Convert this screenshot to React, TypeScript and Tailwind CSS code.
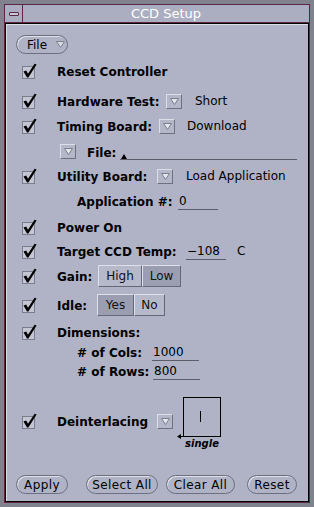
import React from 'react';

const sans = "font-['DejaVu_Sans',sans-serif]";

function Check() {
  return (
    <svg width="16" height="16" viewBox="0 0 16 16" className="block">
      <rect x="0.5" y="3.5" width="12" height="12" fill="#c4c6d3" stroke="#7b7d8c" />
      <path d="M1.5 8.5 L4.2 7.6 L6 10.8 L12.6 0.8 L14.6 1.6 L6.4 14.6 L5 14.6 Z" fill="#000" />
    </svg>
  );
}

function MenuBtn() {
  return (
    <span className="flex h-[15px] w-[16px] shrink-0 items-center justify-center border border-t-[#dcdee8] border-l-[#dcdee8] border-r-[#6f7180] border-b-[#6f7180] bg-[#b4b7c8]">
      <svg width="9" height="7" viewBox="0 0 9 7">
        <path d="M0.5 0.5 H8.5 L4.5 6.5 Z" fill="#e4e6ee" stroke="#7c7e8c" />
      </svg>
    </span>
  );
}

function Pill({ label, w, className = '' }: { label: string; w: string; className?: string }) {
  return (
    <span
      className={`flex h-[19px] shrink-0 items-center justify-center rounded-full border border-[#6d6f7e] shadow-[inset_1px_1px_0_#dfe1ea] text-[12px] tracking-[0.4px] text-black ${w} ${className}`}
    >
      {label}
    </span>
  );
}

function Field({ value, w }: { value: string; w: string }) {
  return (
    <span className={`flex h-[17px] shrink-0 items-center border-b border-[#5b5d6b] pl-[1px] text-[12px] leading-[16px] ${w}`}>
      {value}
    </span>
  );
}

function Toggle({ label, on, w }: { label: string; on?: boolean; w: string }) {
  return (
    <span
      className={`flex h-[22px] items-center justify-center border border-t-[#dfe1ea] border-l-[#dfe1ea] border-r-[#666876] border-b-[#666876] text-[12px] text-[#111] ${w} ${
        on ? 'bg-[#9b9eb1]' : 'bg-[#b6b9ca]'
      }`}
    >
      {label}
    </span>
  );
}

function Row({ h, check = true, children, className = '' }: { h: string; check?: boolean; children: React.ReactNode; className?: string }) {
  return (
    <div className={`flex items-center ${h} ${className}`}>
      <div className="w-[35px] shrink-0">{check && <Check />}</div>
      {children}
    </div>
  );
}

const label = 'text-[12px] font-bold leading-[16px] pt-[2px] whitespace-nowrap';

export default function App() {
  return (
    <div className={`h-[507px] w-[314px] bg-[#80828d] p-[4px] ${sans}`}>
      <div className="flex h-full flex-col border border-[#5a2745]">
        {/* title bar */}
        <div className="flex h-[18px] shrink-0 border-b border-[#5a2745] bg-[#abaec0]">
          <div className="flex w-[18px] items-center justify-center border-r border-[#5a2745]">
            <span className="block h-[4px] w-[10px] rounded-[1px] border border-[#5a2745] bg-[#c8cad6]" />
          </div>
          <div className="flex flex-1 items-center justify-center text-[13px] text-white">CCD Setup</div>
        </div>

        {/* panel */}
        <div className="flex flex-1 flex-col border border-black bg-[#b0b3c5] shadow-[inset_1px_1px_0_#dcdee8] pl-[16px] text-black">
          <div className="-ml-[6px] mt-[11px] flex h-[19px] items-center">
            <span className="flex h-[19px] w-[52px] items-center rounded-full border border-[#6d6f7e] shadow-[inset_1px_1px_0_#dfe1ea] pl-[10px] text-[12px]">
              File
              <svg width="9" height="7" viewBox="0 0 9 7" className="ml-[9px]">
                <path d="M0.5 0.5 H8.5 L4.5 6.5 Z" fill="#d8dae4" stroke="#7c7e8c" />
              </svg>
            </span>
          </div>

          <Row h="h-[34px]">
            <span className={label}>Reset Controller</span>
          </Row>

          <Row h="h-[26px]">
            <span className={`${label} w-[109px]`}>Hardware Test:</span>
            <MenuBtn />
            <span className="ml-[13px] text-[12px]">Short</span>
          </Row>

          <Row h="h-[24px]">
            <span className={`${label} w-[102px]`}>Timing Board:</span>
            <MenuBtn />
            <span className="ml-[12px] text-[12px]">Download</span>
          </Row>

          <Row h="h-[27px]" check={false}>
            <span className="ml-[3px]">
              <MenuBtn />
            </span>
            <span className={`${label} ml-[11px] w-[33px]`}>File:</span>
            <span className="flex h-[17px] w-[177px] items-end border-b border-[#5b5d6b]">
              <svg width="6" height="5" viewBox="0 0 6 5" className="ml-[1px]">
                <path d="M0 5 L3 0 L6 5 Z" fill="#000" />
              </svg>
            </span>
          </Row>

          <Row h="h-[22px]">
            <span className={`${label} w-[100px]`}>Utility Board:</span>
            <MenuBtn />
            <span className="ml-[13px] text-[12px]">Load Application</span>
          </Row>

          <Row h="h-[28px]" check={false}>
            <span className={`${label} ml-[20px] w-[101px]`}>Application #:</span>
            <Field value="0" w="w-[40px]" />
          </Row>

          <Row h="h-[23px]">
            <span className={label}>Power On</span>
          </Row>

          <Row h="h-[26px]">
            <span className={`${label} w-[129px]`}>Target CCD Temp:</span>
            <Field value="−108" w="w-[40px]" />
            <span className="ml-[11px] text-[12px]">C</span>
          </Row>

          <Row h="h-[24px]">
            <span className={`${label} w-[41px]`}>Gain:</span>
            <Toggle label="High" w="w-[44px]" />
            <Toggle label="Low" on w="w-[39px]" />
          </Row>

          <Row h="h-[34px]">
            <span className={`${label} w-[40px]`}>Idle:</span>
            <Toggle label="Yes" on w="w-[37px]" />
            <Toggle label="No" w="w-[31px]" />
          </Row>

          <Row h="h-[20px]">
            <span className={label}>Dimensions:</span>
          </Row>

          <Row h="h-[20px]" check={false}>
            <span className={`${label} ml-[20px] w-[75px]`}>
              # of Cols:
            </span>
            <Field value="1000" w="w-[47px]" />
          </Row>

          <Row h="h-[18px]" check={false}>
            <span className={`${label} ml-[20px] w-[76px]`}>
              # of Rows:
            </span>
            <Field value="800" w="w-[47px]" />
          </Row>

          <div className="flex h-[75px] items-start">
            <div className="mt-[33px] w-[35px] shrink-0">
              <Check />
            </div>
            <span className={`${label} mt-[32px] w-[100px]`}>Deinterlacing</span>
            <span className="mt-[34px]">
              <MenuBtn />
            </span>
            <div className="mt-[17px] ml-[10px] flex flex-col items-center">
              <div className="relative h-[40px] w-[38px] border border-black">
                <span className="absolute left-[16px] top-[13px] h-[11px] w-[1px] bg-black" />
                <svg width="7" height="5" viewBox="0 0 7 5" className="absolute -left-[7px] -bottom-[3px]">
                  <path d="M0 2.5 L4 0 L4 5 Z" fill="#000" />
                  <rect x="3" y="2" width="4" height="1" fill="#000" />
                </svg>
              </div>
              <span className="mt-[1px] text-[10px] font-bold italic leading-[12px]">single</span>
            </div>
          </div>

          <div className="-ml-[6px] mt-[20px] flex items-center">
            <Pill label="Apply" w="w-[52px]" />
            <Pill label="Select All" w="w-[72px]" className="ml-[18px]" />
            <Pill label="Clear All" w="w-[69px]" className="ml-[8px]" />
            <Pill label="Reset" w="w-[50px]" className="ml-[12px]" />
          </div>
        </div>
      </div>
    </div>
  );
}
